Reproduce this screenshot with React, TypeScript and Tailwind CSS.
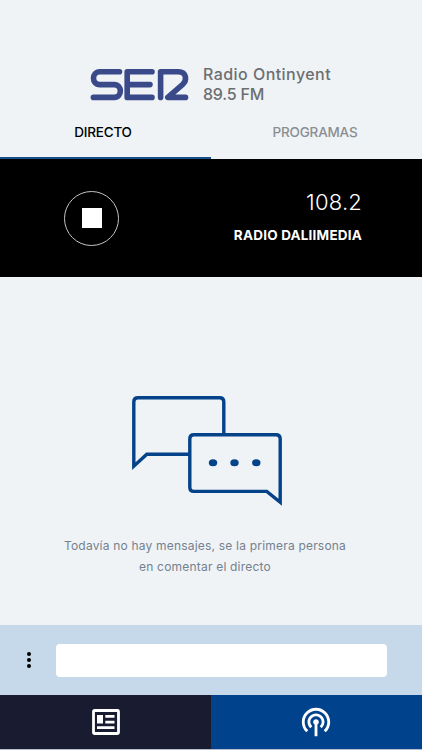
import { useState } from "react";
import { MdPodcasts } from "react-icons/md";

type Tab = "directo" | "programas";

function SerLogo() {
  return (
    <svg width="100" height="34" viewBox="0 0 100 34" fill="none" aria-label="SER">
      <g stroke="#39498a" strokeWidth="5.6" strokeLinejoin="round" strokeLinecap="round">
        <path d="M29.5 4.8H9.8c-8.4 0-8.4 12.8 0 12.8h14.4c8.2 0 8.2 12.8 0 12.8H3.4" />
        <path d="M62 4.8H37.2v25.600H62M38 17.600h22" />
        <path d="M70.600 30.400V4.800h17.700c8.400 0 9 8.800 4.200 12.800L77.800 30.400H95.500" />
      </g>
    </svg>
  );
}

function ChatBubbles() {
  return (
    <svg width="150" height="110" viewBox="0 0 150 110" fill="none">
      <g stroke="#044289" strokeWidth="3.4">
        <path d="M91.8 38V6q0-4.2-4.2-4.2H6q-4.2 0-4.2 4.2v64.2l13-11.9H57" />
        <path d="M148.2 106.3V43q0-4.2-4.2-4.2H62q-4.2 0-4.2 4.2v48.2q0 4.2 4.2 4.2h72.8z" />
      </g>
      <g fill="#044289">
        <ellipse cx="81" cy="66.7" rx="4.2" ry="3.5" />
        <ellipse cx="102.5" cy="66.7" rx="4.2" ry="3.5" />
        <ellipse cx="124.3" cy="66.7" rx="4.2" ry="3.5" />
      </g>
    </svg>
  );
}

function NewsIcon() {
  return (
    <svg width="28" height="26" viewBox="0 0 28 26" fill="none">
      <rect x="1.5" y="1.5" width="25" height="23" rx="1" stroke="white" strokeWidth="2.8" />
      <path
        fill="white"
        d="M5 6h6v8.5H5zM13.3 6h9.2v2.700h-9.200zM13.300 11.800h9.200v2.700h-9.200zM5 17.200h17.500v2.700H5z"
      />
    </svg>
  );
}

export default function App() {
  const [tab, setTab] = useState<Tab>("directo");
  const [message, setMessage] = useState("");

  return (
    <div className="flex h-[750px] w-[422px] flex-col overflow-hidden bg-[#eff3f6] font-['Inter',sans-serif]">
      <header className="flex h-[110px] shrink-0 items-end pb-[6px] pl-[90px]">
        <div className="flex items-start gap-[13px]">
          <div className="pt-[3px]">
            <SerLogo />
          </div>
          <div className="text-[16px] leading-5 font-medium tracking-[0.45px] whitespace-nowrap text-[#6c6e70]">
            <p>Radio Ontinyent</p>
            <p className="tracking-[-0.2px]">89.5 FM</p>
          </div>
        </div>
      </header>

      <nav className="grid h-[49px] shrink-0 grid-cols-2 text-[13.5px]">
        <button
          onClick={() => setTab("directo")}
          className={`border-b-2 pr-[5px] pb-[2px] font-medium tracking-[-0.2px] ${tab === "directo" ? "border-[#174f8d] text-black" : "border-transparent text-[#8b8e91]"}`}
        >
          DIRECTO
        </button>
        <button
          onClick={() => setTab("programas")}
          className={`border-b-2 pr-[3px] pb-[2px] font-medium tracking-[-0.2px] ${tab === "programas" ? "border-[#174f8d] text-black" : "border-transparent text-[#8b8e91]"}`}
        >
          PROGRAMAS
        </button>
      </nav>

      <section className="flex h-[118px] shrink-0 items-center justify-between bg-black pr-[60px] pl-16 text-white">
        <button className="flex size-[55px] items-center justify-center rounded-full border border-[#c4c4c4]">
          <span className="size-5 bg-white" />
        </button>
        <div className="pb-[3px] text-right">
          <p className="text-[22px] leading-[34px] font-light tracking-[0.2px]">108.2</p>
          <p className="mt-[2px] text-[13.5px] leading-7 font-bold tracking-[0.2px]">RADIO DALIIMEDIA</p>
        </div>
      </section>

      <main className="flex flex-1 flex-col items-center pt-[119px]">
        <div className="pr-[9px]">
          <ChatBubbles />
        </div>
        <p className="mt-[29px] pr-[12px] text-center text-[12px] leading-[21px] tracking-[0.2px] whitespace-nowrap text-[#748190]">
          Todavía no hay mensajes, se la primera persona
          <br />
          en comentar el directo
        </p>
      </main>

      <form
        className="flex h-[70px] shrink-0 items-center bg-[#c6d9ea] pl-[27px]"
        onSubmit={(event) => event.preventDefault()}
      >
        <button type="button" className="flex flex-col gap-[2px]">
          <span className="size-1 rounded-full bg-black" />
          <span className="size-1 rounded-full bg-black" />
          <span className="size-1 rounded-full bg-black" />
        </button>
        <input
          value={message}
          onChange={(event) => setMessage(event.target.value)}
          className="ml-[25px] h-[33px] w-[331px] rounded bg-white px-3 text-sm outline-none"
        />
      </form>

      <footer className="grid h-[55px] shrink-0 grid-cols-2 border-b border-[#b5bfd0] text-white">
        <button className="flex items-center justify-center bg-[#191b30]">
          <NewsIcon />
        </button>
        <button className="flex items-center justify-center bg-[#00428b] pr-[1px]">
          <MdPodcasts size={34} />
        </button>
      </footer>
    </div>
  );
}
